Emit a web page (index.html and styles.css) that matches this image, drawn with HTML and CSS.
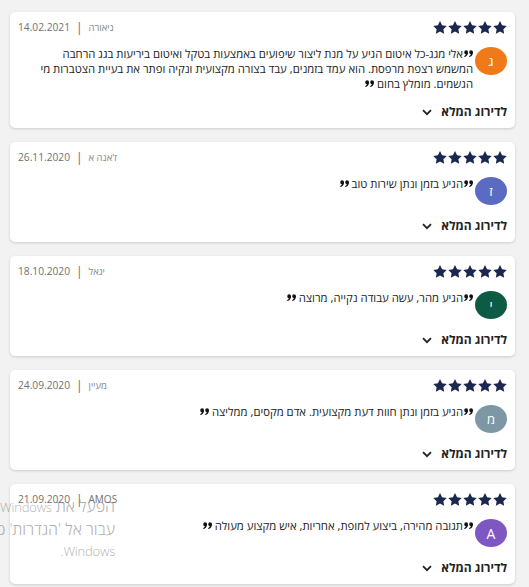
FILE: index.html
```html
<!DOCTYPE html>
<html lang="he" dir="rtl">
<head>
<meta charset="utf-8">
<title>ביקורות</title>
<link rel="stylesheet" href="styles.css">
</head>
<body>
<svg width="0" height="0" class="defs" aria-hidden="true">
  <defs>
    <symbol id="star" viewBox="2 2 20 19.3"><path d="M12 2l3.09 6.26L22 9.27l-5 4.87 1.18 6.88L12 17.77l-6.18 3.25L7 14.14 2 9.27l6.91-1.01L12 2z"/></symbol>
    <symbol id="q" viewBox="0 0 16 12"><path d="M3.6 0.2a3.6 3.6 0 0 1 3.6 3.8c0 4-2.6 7-6.4 8l-0.6-1.5c1.8-0.8 2.9-2 3.1-3.2a3.6 3.6 0 0 1 0.3-7.1z"/><path d="M12.4 0.2a3.6 3.6 0 0 1 3.6 3.8c0 4-2.6 7-6.4 8l-0.6-1.5c1.8-0.8 2.9-2 3.1-3.2a3.6 3.6 0 0 1 0.3-7.1z"/></symbol>
    <symbol id="chev" viewBox="0 0 10 7"><path d="M1 1.2l4 4 4-4" fill="none" stroke="currentColor" stroke-width="1.8"/></symbol>
  </defs>
</svg>

<main class="list">
  <article class="card">
    <div class="card-head">
      <div class="stars"><svg><use href="#star"/></svg><svg><use href="#star"/></svg><svg><use href="#star"/></svg><svg><use href="#star"/></svg><svg><use href="#star"/></svg></div>
      <div class="meta"><span class="name">ניאורה</span><span class="sep">|</span><span class="date">14.02.2021</span></div>
    </div>
    <div class="card-body">
      <div class="avatar av-orange">ג</div>
      <p class="quote"><svg class="qm"><use href="#q"/></svg>אלי מגג-כל איטום הגיע על מנת ליצור שיפועים באמצעות בטקל ואיטום ביריעות בגג הרחבה המשמש רצפת מרפסת. הוא עמד בזמנים, עבד בצורה מקצועית ונקיה ופתר את בעיית הצטברות מי הגשמים. מומלץ בחום <svg class="qm"><use href="#q"/></svg></p>
    </div>
    <button class="more" type="button">לדירוג המלא<svg class="chev"><use href="#chev"/></svg></button>
  </article>

  <article class="card">
    <div class="card-head">
      <div class="stars"><svg><use href="#star"/></svg><svg><use href="#star"/></svg><svg><use href="#star"/></svg><svg><use href="#star"/></svg><svg><use href="#star"/></svg></div>
      <div class="meta"><span class="name">ז'אנה א</span><span class="sep">|</span><span class="date">26.11.2020</span></div>
    </div>
    <div class="card-body">
      <div class="avatar av-blue">ז</div>
      <p class="quote"><svg class="qm"><use href="#q"/></svg>הגיע בזמן ונתן שירות טוב <svg class="qm"><use href="#q"/></svg></p>
    </div>
    <button class="more" type="button">לדירוג המלא<svg class="chev"><use href="#chev"/></svg></button>
  </article>

  <article class="card">
    <div class="card-head">
      <div class="stars"><svg><use href="#star"/></svg><svg><use href="#star"/></svg><svg><use href="#star"/></svg><svg><use href="#star"/></svg><svg><use href="#star"/></svg></div>
      <div class="meta"><span class="name">יגאל</span><span class="sep">|</span><span class="date">18.10.2020</span></div>
    </div>
    <div class="card-body">
      <div class="avatar av-green">י</div>
      <p class="quote"><svg class="qm"><use href="#q"/></svg>הגיע מהר, עשה עבודה נקייה, מרוצה <svg class="qm"><use href="#q"/></svg></p>
    </div>
    <button class="more" type="button">לדירוג המלא<svg class="chev"><use href="#chev"/></svg></button>
  </article>

  <article class="card">
    <div class="card-head">
      <div class="stars"><svg><use href="#star"/></svg><svg><use href="#star"/></svg><svg><use href="#star"/></svg><svg><use href="#star"/></svg><svg><use href="#star"/></svg></div>
      <div class="meta"><span class="name">מעיין</span><span class="sep">|</span><span class="date">24.09.2020</span></div>
    </div>
    <div class="card-body">
      <div class="avatar av-slate">מ</div>
      <p class="quote"><svg class="qm"><use href="#q"/></svg>הגיע בזמן ונתן חוות דעת מקצועית. אדם מקסים, ממליצה <svg class="qm"><use href="#q"/></svg></p>
    </div>
    <button class="more" type="button">לדירוג המלא<svg class="chev"><use href="#chev"/></svg></button>
  </article>

  <article class="card">
    <div class="card-head">
      <div class="stars"><svg><use href="#star"/></svg><svg><use href="#star"/></svg><svg><use href="#star"/></svg><svg><use href="#star"/></svg><svg><use href="#star"/></svg></div>
      <div class="meta"><span class="name name-latin">AMOS</span><span class="sep">|</span><span class="date">21.09.2020</span></div>
    </div>
    <div class="card-body">
      <div class="avatar av-purple">A</div>
      <p class="quote"><svg class="qm"><use href="#q"/></svg>תגובה מהירה, ביצוע למופת, אחריות, איש מקצוע מעולה <svg class="qm"><use href="#q"/></svg></p>
    </div>
    <button class="more" type="button">לדירוג המלא<svg class="chev"><use href="#chev"/></svg></button>
  </article>
</main>

<div class="watermark" aria-hidden="true">
  <div class="wm-line">הפעל את <span class="wm-latin">Windows</span></div>
  <div class="wm-line">עבור אל 'הגדרות' כדי להפעיל את</div>
  <div class="wm-line"><span class="wm-latin">Windows.</span></div>
</div>
</body>
</html>
```

FILE: styles.css
```css
html, body {
  margin: 0;
  padding: 0;
}

body {
  background: #f2f2f2;
  font-family: "Open Sans", "Liberation Sans", sans-serif;
  color: #222;
  width: 529px;
  height: 587px;
  overflow: hidden;
  position: relative;
}

.defs {
  position: absolute;
  width: 0;
  height: 0;
}

.list {
  display: flex;
  flex-direction: column;
  gap: 14px;
  padding: 12px 14px 0 10px;
}

.card {
  background: #fff;
  border-radius: 5px;
  box-shadow: 0 1px 3px rgba(0, 0, 0, 0.16);
  padding: 7px 8px 8px 8px;
  display: flex;
  flex-direction: column;
}

.card-head {
  display: flex;
  justify-content: space-between;
  align-items: center;
  height: 16px;
}

.stars {
  display: flex;
  gap: 1px;
  color: #1b2750;
}

.stars svg {
  width: 14px;
  height: 13px;
  fill: currentColor;
}

.meta {
  display: flex;
  align-items: center;
  gap: 6px;
  color: #707070;
  font-size: 10.2px;
}

.name {
  font-size: 9.5px;
  color: #858585;
}

.name-latin {
  font-size: 10px;
  color: #707070;
}

.sep {
  font-size: 12px;
  color: #666;
}

.card-body {
  display: flex;
  align-items: flex-start;
  gap: 2px;
  margin-top: 11px;
}

.avatar {
  flex: 0 0 auto;
  width: 32px;
  height: 28px;
  margin-top: 1px;
  border-radius: 50%;
  color: #fff;
  font-size: 13px;
  display: flex;
  align-items: center;
  justify-content: center;
}

.av-orange { background: #f07a1a; }
.av-blue { background: #5b6bc2; }
.av-green { background: #0d5a45; }
.av-slate { background: #7d97a5; }
.av-purple { background: #7e57c2; font-size: 14px; }

.quote {
  margin: 0 0 0 22px;
  font-size: 11.3px;
  line-height: 15px;
  color: #222;
}

.qm {
  width: 9px;
  height: 7px;
  fill: #111;
  vertical-align: 1px;
  margin-left: 1px;
}

.more {
  align-self: flex-start;
  margin-top: 11px;
  height: 18px;
  padding: 0;
  border: 0;
  background: none;
  font-family: inherit;
  font-size: 12px;
  font-weight: 700;
  color: #222;
  display: flex;
  align-items: center;
  gap: 9px;
}

.chev {
  width: 10px;
  height: 7px;
  color: #222;
  margin-top: 2px;
}

.watermark {
  position: absolute;
  right: 414px;
  top: 496px;
  white-space: nowrap;
  text-align: right;
  color: rgba(120, 120, 120, 0.6);
  font-family: "Open Sans", "Liberation Sans", sans-serif;
  font-weight: 300;
  font-size: 16px;
  line-height: 21.5px;
  pointer-events: none;
}

.wm-line {
  direction: rtl;
}

.wm-latin {
  font-size: 13px;
  letter-spacing: -0.2px;
}
```
